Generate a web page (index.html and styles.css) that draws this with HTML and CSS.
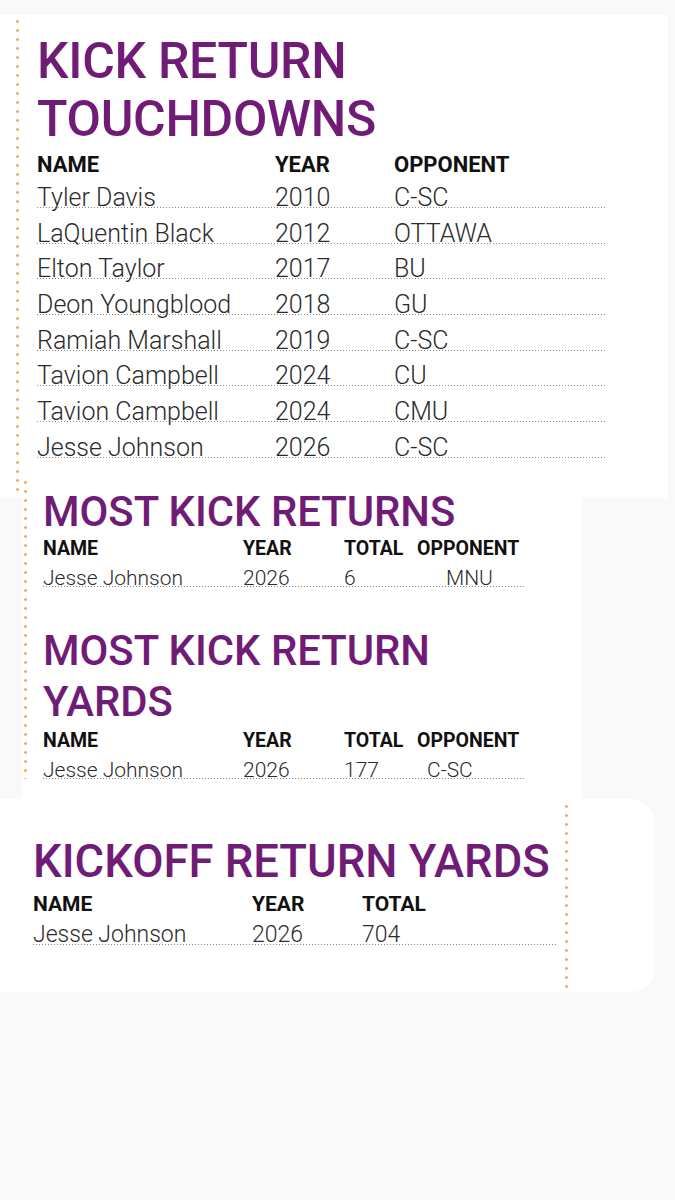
FILE: index.html
```html
<!DOCTYPE html>
<html lang="en">
<head>
<meta charset="utf-8">
<title>Kick Return Records</title>
<link rel="stylesheet" href="styles.css">
</head>
<body>
<section class="card-td">
  <div class="rail rail-td"></div>
  <div class="content-td">
    <h2 class="title title-td">KICK RETURN<br>TOUCHDOWNS</h2>
    <div class="thead thead-td"><span>NAME</span><span>YEAR</span><span>OPPONENT</span></div>
    <div class="rows-td">
      <div class="row row-td"><span>Tyler Davis</span><span>2010</span><span>C-SC</span></div>
      <div class="row row-td"><span>LaQuentin Black</span><span>2012</span><span>OTTAWA</span></div>
      <div class="row row-td"><span>Elton Taylor</span><span>2017</span><span>BU</span></div>
      <div class="row row-td"><span>Deon Youngblood</span><span>2018</span><span>GU</span></div>
      <div class="row row-td"><span>Ramiah Marshall</span><span>2019</span><span>C-SC</span></div>
      <div class="row row-td"><span>Tavion Campbell</span><span>2024</span><span>CU</span></div>
      <div class="row row-td"><span>Tavion Campbell</span><span>2024</span><span>CMU</span></div>
      <div class="row row-td"><span>Jesse Johnson</span><span>2026</span><span>C-SC</span></div>
    </div>
  </div>
</section>

<section class="panel-kr">
  <div class="rail rail-kr"></div>
  <div class="content-kr">
    <h2 class="title title-kr title-kr-first">MOST KICK RETURNS</h2>
    <div class="thead thead-kr"><span>NAME</span><span>YEAR</span><span>TOTAL</span><span>OPPONENT</span></div>
    <div class="row row-kr"><span>Jesse Johnson</span><span>2026</span><span>6</span><span class="off-mnu">MNU</span></div>

    <h2 class="title title-kr title-kr-second">MOST KICK RETURN<br>YARDS</h2>
    <div class="thead thead-kr thead-kr-second"><span>NAME</span><span>YEAR</span><span>TOTAL</span><span>OPPONENT</span></div>
    <div class="row row-kr"><span>Jesse Johnson</span><span>2026</span><span>177</span><span class="off-csc">C-SC</span></div>
  </div>
</section>

<section class="card-ko">
  <div class="content-ko">
    <h2 class="title title-ko">KICKOFF RETURN YARDS</h2>
    <div class="thead thead-ko"><span>NAME</span><span>YEAR</span><span>TOTAL</span></div>
    <div class="row row-ko"><span>Jesse Johnson</span><span>2026</span><span>704</span></div>
  </div>
  <div class="rail rail-ko"></div>
</section>
</body>
</html>
```

FILE: styles.css
```css
* {
  box-sizing: border-box;
  margin: 0;
  padding: 0;
}

body {
  background: #f9f9f9;
  padding-top: 15px;
  font-family: Roboto, "Liberation Sans", sans-serif;
  color: #222;
}

.title {
  color: #701c77;
  font-weight: 500;
  white-space: nowrap;
}

.thead {
  display: grid;
  font-weight: 700;
  color: #111;
  white-space: nowrap;
}

.row {
  display: grid;
  font-weight: 300;
  color: #2b2b2b;
  white-space: nowrap;
  background-image: linear-gradient(to right, #8a8a8a 1px, transparent 1px);
  background-size: 3px 1px;
  background-repeat: repeat-x;
  background-position: left bottom;
}

.rail {
  flex: none;
  width: 3px;
  background-image: radial-gradient(circle at center, #f2a95e 1.1px, transparent 1.7px);
  background-size: 3px 9px;
  background-repeat: repeat-y;
}

/* Section 1: kick return touchdowns */
.card-td {
  display: flex;
  width: 668px;
  background: #fff;
  padding-left: 16px;
}

.rail-td {
  margin: 2px 0 3px;
}

.content-td {
  margin-left: 18px;
  width: 570px;
  padding-top: 17px;
  padding-bottom: 40px;
}

.title-td {
  font-size: 50px;
  line-height: 58px;
  letter-spacing: -0.3px;
}

.thead-td {
  font-size: 22px;
  line-height: 26px;
  margin-top: 3.5px;
  grid-template-columns: 238px 119px 1fr;
}

.rows-td {
  margin-top: 9.5px;
  display: flex;
  flex-direction: column;
  gap: 14.7px;
}

.row-td {
  font-size: 25px;
  line-height: 21px;
  grid-template-columns: 238px 119px 1fr;
}

/* Section 2: most kick returns */
.panel-kr {
  display: flex;
  width: 560px;
  margin-left: 22px;
  background: #fff;
  padding-left: 2px;
  padding-bottom: 20px;
}

.rail-kr {
  margin-top: -20px;
}

.content-kr {
  margin-left: 16px;
  width: 481px;
}

.title-kr {
  font-size: 41.8px;
  line-height: 51px;
}

.title-kr-first {
  margin-top: -11.7px;
}

.title-kr-second {
  margin-top: 37.9px;
}

.thead-kr {
  font-size: 19.5px;
  line-height: 24px;
  grid-template-columns: 200px 101px 73px 1fr;
}

.thead-kr-second {
  margin-top: 2.2px;
}

.row-kr {
  font-size: 21px;
  line-height: 18.4px;
  margin-top: 7.5px;
  grid-template-columns: 200px 101px 73px 1fr;
}

.off-mnu {
  padding-left: 29px;
}

.off-csc {
  padding-left: 10px;
}

/* Section 3: kickoff return yards */
.card-ko {
  display: flex;
  width: 655px;
  background: #fff;
  border-radius: 0 24px 24px 0;
  padding-left: 33px;
}

.content-ko {
  width: 524px;
  padding-top: 37.6px;
  padding-bottom: 47.5px;
}

.title-ko {
  font-size: 45.4px;
  line-height: 50px;
}

.thead-ko {
  font-size: 21px;
  line-height: 25px;
  margin-top: 5.3px;
  grid-template-columns: 219px 110px 1fr;
}

.row-ko {
  font-size: 23px;
  line-height: 19.7px;
  margin-top: 8px;
  grid-template-columns: 219px 110px 1fr;
}

.rail-ko {
  margin: 3px 0 3px 8px;
}
```
